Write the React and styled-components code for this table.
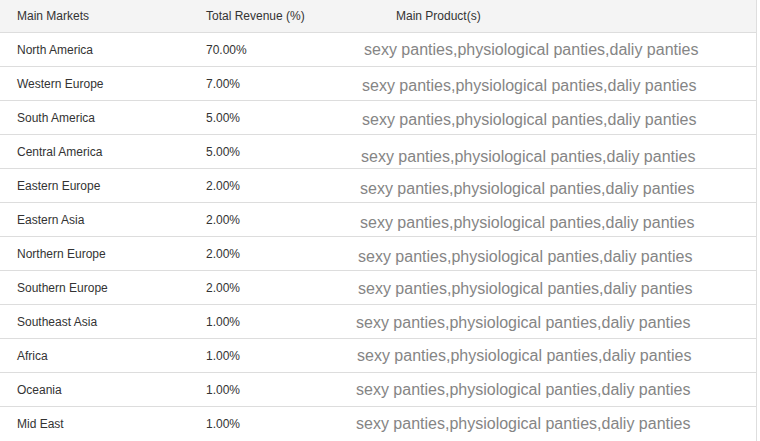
import styled, { createGlobalStyle } from 'styled-components';

const GlobalStyle = createGlobalStyle`
  body {
    margin: 0;
    padding: 0;
    background: #fff;
    font-family: 'Liberation Sans', Arial, sans-serif;
  }
`;

const markets = [
  { name: 'North America', share: '70.00%', dx: -15, dy: 0 },
  { name: 'Western Europe', share: '7.00%', dx: -17, dy: 2 },
  { name: 'South America', share: '5.00%', dx: -17, dy: 2 },
  { name: 'Central America', share: '5.00%', dx: -18, dy: 5 },
  { name: 'Eastern Europe', share: '2.00%', dx: -19, dy: 3 },
  { name: 'Eastern Asia', share: '2.00%', dx: -19, dy: 3 },
  { name: 'Northern Europe', share: '2.00%', dx: -21, dy: 3 },
  { name: 'Southern Europe', share: '2.00%', dx: -21, dy: 1 },
  { name: 'Southeast Asia', share: '1.00%', dx: -23, dy: 1 },
  { name: 'Africa', share: '1.00%', dx: -22, dy: 0 },
  { name: 'Oceania', share: '1.00%', dx: -23, dy: 0 },
  { name: 'Mid East', share: '1.00%', dx: -23, dy: 0 },
];

const Table = styled.div`
  width: 757px;
  border-right: 1px solid #dedede;
  box-sizing: border-box;
`;

const Row = styled.div`
  display: grid;
  grid-template-columns: 189px 190px 1fr;
  height: ${(p) => (p.$head ? '33px' : '34px')};
  background: ${(p) => (p.$head ? '#f4f4f4' : '#fff')};
  border-bottom: 1px solid #dddddd;
  box-sizing: border-box;
  &:last-child {
    border-bottom: none;
  }
`;

const Cell = styled.div`
  display: flex;
  align-items: center;
  padding-left: 17px;
  font-size: 12px;
  color: #333;
  white-space: nowrap;
`;

const Product = styled.div`
  display: flex;
  align-items: center;
  white-space: nowrap;
  font-size: 16px;
  color: #858585;
  margin-left: ${(p) => p.$dx}px;
  padding-top: ${(p) => Math.max(p.$dy, 0) * 2}px;
  padding-bottom: ${(p) => Math.max(-p.$dy, 0) * 2}px;
`;

export default function App() {
  return (
    <>
      <GlobalStyle />
      <Table>
        <Row $head>
          <Cell>Main Markets</Cell>
          <Cell>Total Revenue (%)</Cell>
          <Cell>Main Product(s)</Cell>
        </Row>
        {markets.map((m) => (
          <Row key={m.name}>
            <Cell>{m.name}</Cell>
            <Cell>{m.share}</Cell>
            <Product $dx={m.dx} $dy={m.dy}>
              sexy panties,physiological panties,daliy panties
            </Product>
          </Row>
        ))}
      </Table>
    </>
  );
}
